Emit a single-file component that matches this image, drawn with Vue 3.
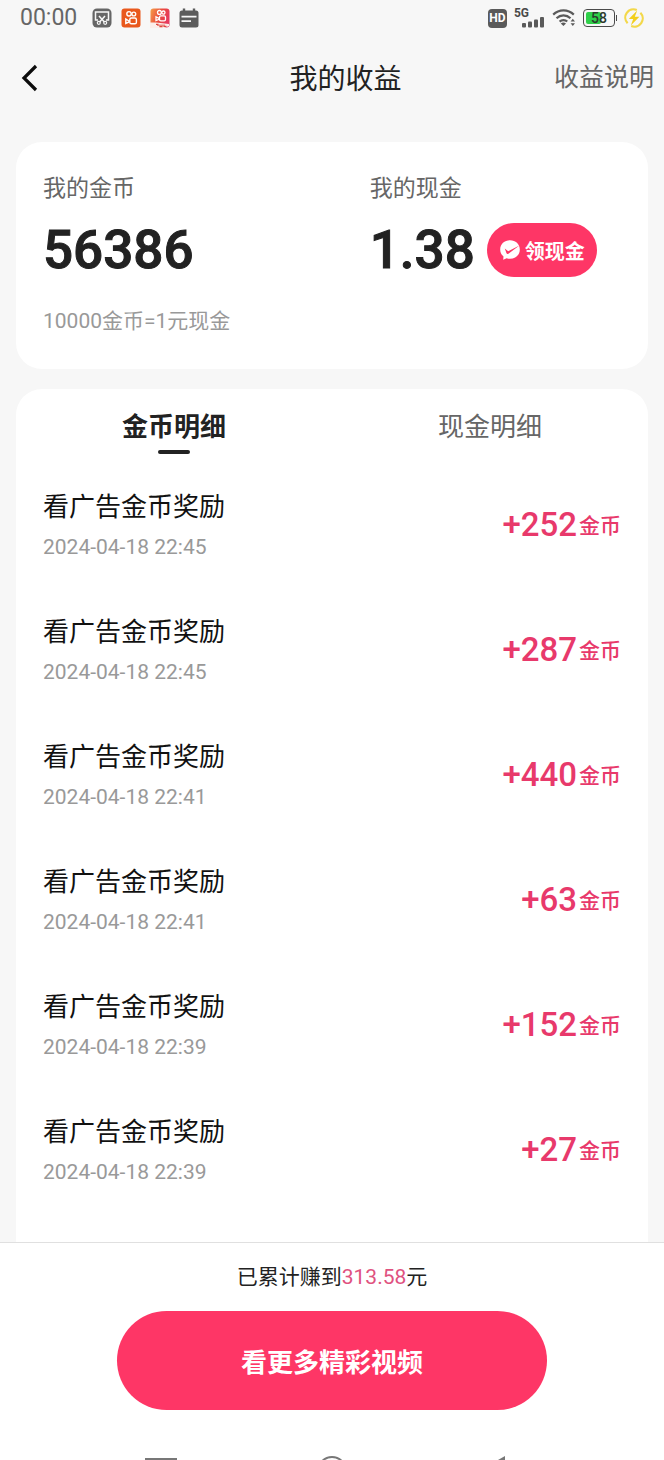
<template>
  <div class="page">
    <!-- 系统状态栏 -->
    <div class="status-bar">
      <div class="status-left">
        <span class="clock">00:00</span>
        <svg class="status-icon" viewBox="0 0 20 20">
          <rect x="0.5" y="0.5" width="19" height="19" rx="4.5" fill="#666" />
          <path d="M6 12H3.5V4H16.5V12H14" fill="none" stroke="#f7f7f7" stroke-width="1.5" />
          <path d="M7 8L12.4 14M13 8L7.6 14" stroke="#f7f7f7" stroke-width="1.5" />
          <circle cx="6.8" cy="14.8" r="1.5" fill="none" stroke="#f7f7f7" stroke-width="1.2" />
          <circle cx="13.2" cy="14.8" r="1.5" fill="none" stroke="#f7f7f7" stroke-width="1.2" />
        </svg>
        <svg class="status-icon" viewBox="0 0 20 20">
          <rect x="0.5" y="0.5" width="19" height="19" rx="3" fill="#e9581c" />
          <g fill="none" stroke="#fff" stroke-width="1.4">
            <circle cx="8" cy="5.8" r="2.2" />
            <circle cx="12.8" cy="6" r="1.9" />
            <rect x="8.8" y="10" width="6.6" height="5.8" rx="1.6" />
            <path d="M8 13L4.8 11V15.4L8 14Z" />
          </g>
        </svg>
        <svg class="status-icon" viewBox="0 0 20 20">
          <defs>
            <linearGradient id="lite" x1="0" y1="0" x2="1" y2="0.4">
              <stop offset="0" stop-color="#f5a04a" />
              <stop offset="0.55" stop-color="#ea4a3c" />
              <stop offset="1" stop-color="#e63a5e" />
            </linearGradient>
          </defs>
          <rect x="0.5" y="0.5" width="19" height="19" rx="3" fill="url(#lite)" />
          <g fill="none" stroke="#fff" stroke-width="1.3">
            <circle cx="9.4" cy="4.4" r="1.9" />
            <circle cx="13.4" cy="4.6" r="1.6" />
            <rect x="9.5" y="7.8" width="6" height="5" rx="1.3" />
            <path d="M9 10.4L6 8.8V12.6L9 11.4Z" />
          </g>
          <path d="M0 14.5L6 14.5L19 16V18L14 20H0Z" fill="#fbeeea" />
          <path d="M6 16.4H8V18M10 16.6V18.6H12V16.6M14 16.4V18.4H16.5" fill="none" stroke="#e0473f" stroke-width="1.2" />
        </svg>
        <svg class="status-icon" viewBox="0 0 20 20">
          <rect x="0.5" y="2.5" width="19" height="17" rx="2.5" fill="#5c5c5c" />
          <path d="M5 0.5V4M15 0.5V4" stroke="#5c5c5c" stroke-width="2.4" />
          <path d="M2.5 8.7H17.5M2.5 13.2H12" stroke="#f7f7f7" stroke-width="1.7" />
        </svg>
      </div>
      <div class="status-right">
        <span class="hd">HD</span>
        <span class="signal">
          <span class="signal-type">5G</span>
          <svg width="24" height="12" viewBox="0 0 24 12" fill="#5a5a5a">
            <rect x="1" y="7" width="4" height="4.5" rx="1" />
            <rect x="7" y="5.5" width="4" height="6" rx="1" />
            <rect x="13" y="3.5" width="4" height="8" rx="1" />
            <rect x="19" y="1" width="4" height="10.5" rx="1" />
          </svg>
        </span>
        <svg width="24" height="20" viewBox="0 0 24 20">
          <g fill="none" stroke="#5a5a5a" stroke-width="2.2">
            <path d="M1.2 6.6C7 1 16 1 21.8 6.6" />
            <path d="M4.5 10.2C8.5 6.4 14.5 6.4 18.5 10.2" />
            <path d="M7.6 13.6C9.8 11.5 13.2 11.5 15.2 13.6" />
          </g>
          <path d="M8.8 15.4Q11.4 13.4 14 15.4L11.4 18Z" fill="#5a5a5a" />
          <path d="M20.8 10.8L23 13.6H18.6ZM20.8 18L23 15.2H18.6Z" fill="#5a5a5a" />
        </svg>
        <span class="battery">
          <span class="battery-fill" :style="{ width: battery + '%' }"></span>
          <span class="battery-text">{{ battery }}</span>
        </span>
        <svg class="status-icon" viewBox="0 0 20 20">
          <g fill="none" stroke="#f3d84a" stroke-width="2.2">
            <path d="M12.8 2A8.2 8.2 0 0 0 3.6 15.2" />
            <path d="M7.2 18A8.2 8.2 0 0 0 16.4 4.8" />
          </g>
          <path d="M13.2 2.5L4.8 11H9.2L6.8 17.5L15.4 8.8H10.8Z" fill="#f2cf1d" />
        </svg>
      </div>
    </div>

    <!-- 顶部导航 -->
    <header class="navbar">
      <button class="back-btn" type="button" aria-label="返回">
        <svg width="18" height="28" viewBox="0 0 18 28">
          <path d="M15 2L3 14L15 26" fill="none" stroke="#0c0c0c" stroke-width="3.2" />
        </svg>
      </button>
      <h1 class="nav-title">我的收益</h1>
      <a class="nav-link" href="#">收益说明</a>
    </header>

    <main class="main">
      <!-- 余额 -->
      <section class="balance-card">
        <div class="balance-item">
          <div class="balance-label">我的金币</div>
          <div class="balance-row">
            <span class="balance-value">56386</span>
          </div>
          <div class="balance-note">10000金币=1元现金</div>
        </div>
        <div class="balance-item">
          <div class="balance-label">我的现金</div>
          <div class="balance-row">
            <span class="balance-value">1.38</span>
            <button class="cash-btn" type="button">
              <svg width="22" height="22" viewBox="0 0 22 22">
                <path d="M11 1.2C16.6 1.2 20.8 5 20.8 10.4S16.6 19.8 11 19.8C9.8 19.8 8.7 19.6 7.7 19.2L4.2 20.8L4.5 17.4C2.4 15.7 1.2 13.3 1.2 10.4C1.2 5 5.4 1.2 11 1.2Z" fill="#fff" />
                <path d="M5.8 9.6L9.2 12.2L20.4 6.4L9.4 14.8Q8 15.4 7.4 14Z" fill="#fe3666" />
              </svg>
              领现金
            </button>
          </div>
        </div>
      </section>

      <!-- 明细 -->
      <section class="detail-card">
        <div class="tabs">
          <button
            v-for="(tab, index) in tabs"
            :key="tab"
            type="button"
            :class="['tab', { active: activeTab === index }]"
            @click="activeTab = index"
          >
            {{ tab }}
          </button>
        </div>
        <ul class="record-list">
          <li v-for="(item, index) in records" :key="index" class="record">
            <div class="record-info">
              <div class="record-title">看广告金币奖励</div>
              <div class="record-time">{{ item.time }}</div>
            </div>
            <div class="record-amount">
              <span>+{{ item.amount }}</span>
              <span class="unit">金币</span>
            </div>
          </li>
        </ul>
      </section>
    </main>

    <!-- 底部操作 -->
    <footer class="footer">
      <p class="total">已累计赚到<span class="total-num">313.58</span>元</p>
      <button class="more-btn" type="button">看更多精彩视频</button>
      <div class="system-nav">
        <svg width="32" height="5" viewBox="0 0 32 5">
          <path d="M0 4H32" stroke="#777" stroke-width="2" />
        </svg>
        <svg width="32" height="5" viewBox="0 0 32 5">
          <circle cx="16" cy="16" r="14" fill="none" stroke="#777" stroke-width="2" />
        </svg>
        <svg width="32" height="5" viewBox="0 0 32 5">
          <path d="M18 1V5H11Z" fill="#777" />
        </svg>
      </div>
    </footer>
  </div>
</template>

<script setup>
import { ref } from 'vue'

const battery = ref(58)
const activeTab = ref(0)
const tabs = ['金币明细', '现金明细']

const records = [
  { time: '2024-04-18 22:45', amount: 252 },
  { time: '2024-04-18 22:45', amount: 287 },
  { time: '2024-04-18 22:41', amount: 440 },
  { time: '2024-04-18 22:41', amount: 63 },
  { time: '2024-04-18 22:39', amount: 152 },
  { time: '2024-04-18 22:39', amount: 27 }
]
</script>

<style>
body {
  margin: 0;
  background: #f7f7f7;
}
</style>

<style scoped>
.page {
  display: flex;
  flex-direction: column;
  min-height: 100vh;
  background: #f7f7f7;
  font-family: Roboto, 'Noto Sans CJK SC', sans-serif;
  color: #222;
}

button {
  padding: 0;
  border: none;
  background: none;
  font-family: inherit;
  cursor: pointer;
}

svg {
  display: block;
  flex-shrink: 0;
}

/* 状态栏 */
.status-bar {
  display: flex;
  align-items: center;
  justify-content: space-between;
  height: 36px;
  padding: 0 20px;
}

.status-left {
  display: flex;
  align-items: center;
  gap: 9px;
}

.clock {
  margin-right: 6px;
  font-size: 23px;
  line-height: 36px;
  color: #666;
}

.status-icon {
  width: 20px;
  height: 20px;
}

.status-right {
  display: flex;
  align-items: center;
  gap: 7px;
}

.hd {
  width: 19px;
  height: 19px;
  border-radius: 4px;
  background: #5a5a5a;
  color: #fff;
  font-size: 12px;
  font-weight: 700;
  line-height: 19px;
  text-align: center;
}

.signal {
  display: flex;
  align-items: flex-end;
  height: 20px;
}

.signal-type {
  align-self: flex-start;
  margin-right: -8px;
  font-size: 12px;
  font-weight: 700;
  line-height: 10px;
  color: #4a4a4a;
}

.battery {
  position: relative;
  box-sizing: border-box;
  width: 32px;
  height: 18px;
  margin-right: 2px;
  padding: 2px;
  border: 1px solid #4a4a4a;
  border-radius: 4px;
}

.battery::after {
  content: '';
  position: absolute;
  top: 5px;
  right: -3px;
  width: 1px;
  height: 6px;
  background: #4a4a4a;
}

.battery-fill {
  display: block;
  height: 100%;
  border-radius: 2px;
  background: #2fd04a;
}

.battery-text {
  position: absolute;
  inset: 0;
  font-size: 14px;
  font-weight: 500;
  line-height: 16px;
  text-align: center;
  color: #2c3a2c;
}

/* 导航栏 */
.navbar {
  display: grid;
  grid-template-columns: 17fr auto 16fr;
  align-items: center;
  height: 84px;
  padding: 0 10px 0 21px;
}

.back-btn {
  justify-self: start;
}

.nav-title {
  margin: 0;
  padding-top: 4px;
  font-size: 28px;
  font-weight: 400;
  line-height: 40px;
  color: #222;
}

.nav-link {
  justify-self: end;
  font-size: 25px;
  line-height: 40px;
  color: #666;
  text-decoration: none;
}

.main {
  display: flex;
  flex: 1;
  flex-direction: column;
  gap: 20px;
  padding: 22px 16px 0;
}

/* 余额卡片 */
.balance-card {
  display: grid;
  grid-template-columns: 13fr 10fr;
  padding: 30px 27px 33px;
  border-radius: 26px;
  background: #fff;
}

.balance-label {
  font-size: 23px;
  line-height: 34px;
  color: #666;
}

.balance-row {
  display: flex;
  align-items: center;
  gap: 12px;
  height: 54px;
  margin-top: 17px;
}

.balance-value {
  font-size: 53px;
  font-weight: 500;
  line-height: 54px;
  -webkit-text-stroke: 1px currentColor;
}

.balance-note {
  margin-top: 29px;
  font-size: 21px;
  line-height: 30px;
  color: #999;
}

.cash-btn {
  display: flex;
  align-items: center;
  justify-content: center;
  gap: 4px;
  width: 110px;
  height: 54px;
  border-radius: 27px;
  background: #fe3666;
  color: #fff;
  font-size: 20px;
  font-weight: 700;
  white-space: nowrap;
}

/* 明细卡片 */
.detail-card {
  flex: 1;
  padding-bottom: 28px;
  border-radius: 26px 26px 0 0;
  background: #fff;
}

.tabs {
  display: grid;
  grid-template-columns: 1fr 1fr;
  height: 73px;
}

.tab {
  display: flex;
  flex-direction: column;
  align-items: center;
  padding-top: 18px;
  font-size: 26px;
  line-height: 40px;
  color: #666;
}

.tab.active {
  font-weight: 700;
  color: #222;
}

.tab.active::after {
  content: '';
  width: 32px;
  height: 4px;
  margin-top: 3px;
  border-radius: 2px;
  background: #222;
}

.record-list {
  margin: 0;
  padding: 0 27px;
  list-style: none;
}

.record {
  display: flex;
  align-items: center;
  justify-content: space-between;
  height: 125px;
}

.record-title {
  font-size: 26px;
  line-height: 44px;
  color: #111;
}

.record-time {
  font-size: 21px;
  line-height: 36px;
  color: #999;
}

.record-amount {
  display: flex;
  align-items: center;
  gap: 2px;
  font-size: 33px;
  font-weight: 500;
  line-height: 44px;
  color: #e8396b;
}

.unit {
  padding-top: 2px;
  font-size: 21px;
}

/* 底部 */
.footer {
  display: flex;
  flex-direction: column;
  align-items: center;
  border-top: 1px solid #e0e0e0;
  background: #fff;
}

.total {
  margin: 19px 0;
  font-size: 21px;
  line-height: 30px;
}

.total-num {
  color: #e0527f;
}

.more-btn {
  width: 65%;
  max-width: 430px;
  height: 99px;
  border-radius: 50px;
  background: #fe3666;
  color: #fff;
  font-size: 26px;
  font-weight: 700;
}

.system-nav {
  display: flex;
  align-self: stretch;
  justify-content: space-between;
  margin-top: 45px;
  padding: 0 145px;
}
</style>
